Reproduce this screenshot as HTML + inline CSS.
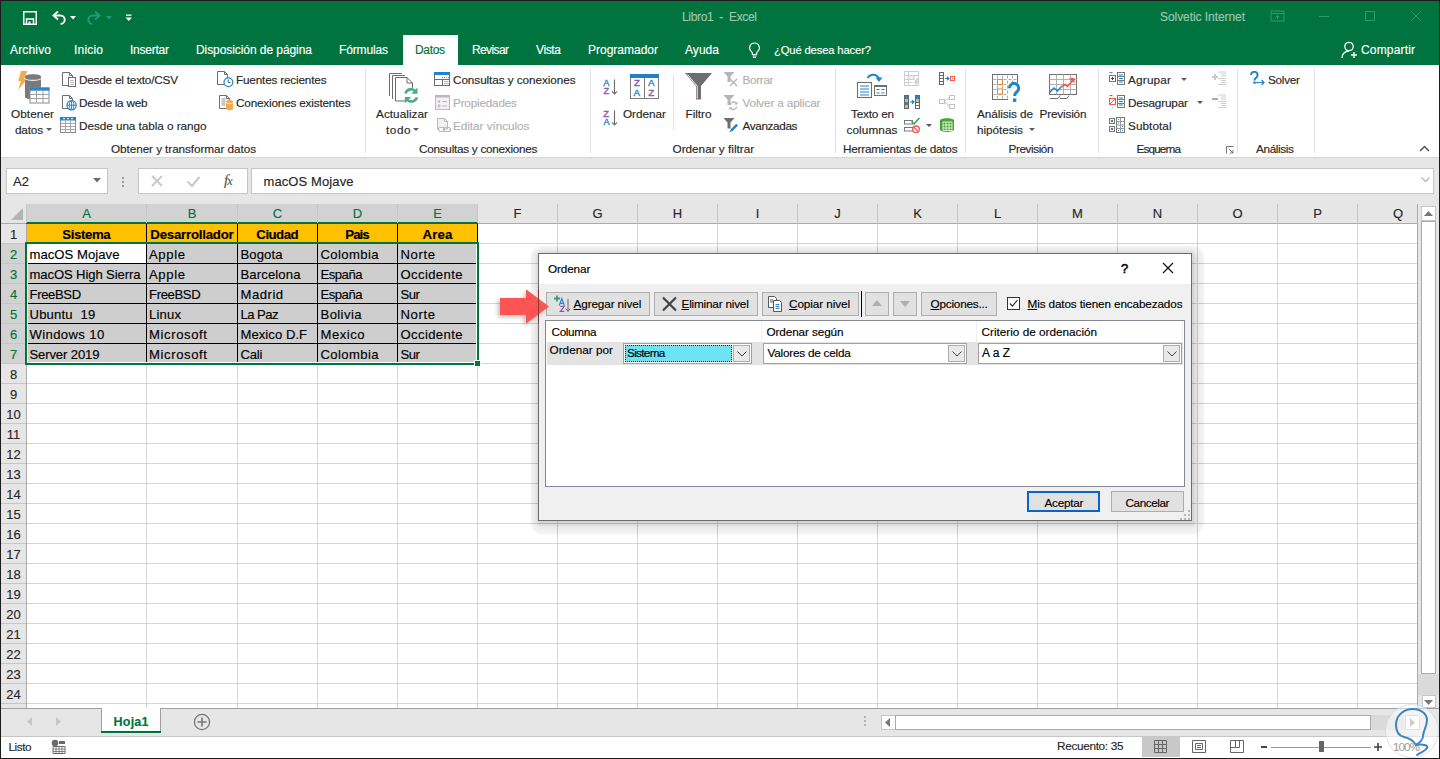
<!DOCTYPE html>
<html><head><meta charset="utf-8">
<style>
*{box-sizing:border-box;margin:0;padding:0}
html,body{width:1440px;height:759px;overflow:hidden;background:#fff;font-family:"Liberation Sans",sans-serif;color:#262626}
.a{position:absolute;white-space:nowrap;-webkit-text-stroke:0.15px currentColor}
u{text-decoration:underline;text-underline-offset:1px}
svg{shape-rendering:geometricPrecision}
</style></head><body>

<div class="a" style="left:0px;top:0px;width:1440px;height:65px;background:#00733e"></div>
<div class="a" style="left:403px;top:35px;width:55px;height:30px;background:#fff"></div>
<div class="a" style="left:682.00px;top:11px;font-size:12px;line-height:12px;color:#9cc8b0;letter-spacing:-0.335px;">Libro1&nbsp; -&nbsp; Excel</div>
<div class="a" style="left:1160.00px;top:11px;font-size:12px;line-height:12px;color:#9cc8b0;letter-spacing:-0.065px;">Solvetic Internet</div>
<svg class="a" style="left:22px;top:10px;" width="16" height="16" viewBox="0 0 16 16"><path d="M1.75 1.75h12.5v12.5h-12.5z" fill="none" stroke="#fff" stroke-width="1.5"/><path d="M4.5 14.5v-5.5h7v5.5" fill="none" stroke="#fff" stroke-width="1.5"/><rect x="6.5" y="11.5" width="2" height="3" fill="#fff"/></svg>
<svg class="a" style="left:51px;top:10px;" width="16" height="16" viewBox="0 0 16 16"><path d="M7 1.5L2.5 5.5L7 9.5" stroke="#fff" stroke-width="1.9" fill="none"/><path d="M3 5.5H9.5A4.2 4.2 0 0 1 9.5 13.9" stroke="#fff" stroke-width="1.9" fill="none"/></svg>
<svg class="a" style="left:70px;top:16px;" width="6" height="4" viewBox="0 0 6 4"><path d="M0 0h6l-3 3.5z" fill="#fff"/></svg>
<svg class="a" style="left:86px;top:10px;" width="16" height="16" viewBox="0 0 16 16"><path d="M9 1.5L13.5 5.5L9 9.5" stroke="#1f9c78" stroke-width="1.9" fill="none"/><path d="M13 5.5H6.5A4.2 4.2 0 0 0 6.5 13.9" stroke="#1f9c78" stroke-width="1.9" fill="none"/></svg>
<svg class="a" style="left:106px;top:16px;" width="6" height="4" viewBox="0 0 6 4"><path d="M0 0h6l-3 3.5z" fill="#1f9c78"/></svg>
<svg class="a" style="left:125px;top:14px;" width="8" height="9" viewBox="0 0 8 9"><rect x="1" y="0.5" width="5.5" height="1.3" fill="#fff"/><path d="M0.5 3.5h6.5l-3.25 3.5z" fill="#fff"/></svg>
<svg class="a" style="left:1270px;top:10px;" width="15" height="12" viewBox="0 0 15 12"><rect x="1" y="1" width="13" height="10" fill="none" stroke="#2a9a70" stroke-width="1"/><path d="M1 3.5h13" stroke="#2a9a70"/><path d="M7.5 9.5v-4M5.5 7.5l2-2 2 2" stroke="#2a9a70" fill="none"/></svg>
<div class="a" style="left:1319px;top:16px;width:10px;height:1px;background:#2a9a70"></div>
<svg class="a" style="left:1364px;top:10px;" width="12" height="12" viewBox="0 0 12 12"><rect x="1.5" y="1.5" width="9" height="9" fill="none" stroke="#2a9a70" stroke-width="1"/></svg>
<svg class="a" style="left:1410px;top:10px;" width="12" height="12" viewBox="0 0 12 12"><path d="M1 1L11 11M11 1L1 11" stroke="#2a9a70" stroke-width="1"/></svg>
<div class="a" style="left:10.00px;top:44px;font-size:12px;line-height:12px;color:#ffffff;letter-spacing:0.163px;">Archivo</div>
<div class="a" style="left:74.00px;top:44px;font-size:12px;line-height:12px;color:#ffffff;letter-spacing:0.198px;">Inicio</div>
<div class="a" style="left:130.00px;top:44px;font-size:12px;line-height:12px;color:#ffffff;letter-spacing:-0.240px;">Insertar</div>
<div class="a" style="left:196.00px;top:44px;font-size:12px;line-height:12px;color:#ffffff;letter-spacing:-0.071px;">Disposición de página</div>
<div class="a" style="left:339.00px;top:44px;font-size:12px;line-height:12px;color:#ffffff;letter-spacing:-0.145px;">Fórmulas</div>
<div class="a" style="left:472.00px;top:44px;font-size:12px;line-height:12px;color:#ffffff;letter-spacing:-0.613px;">Revisar</div>
<div class="a" style="left:536.00px;top:44px;font-size:12px;line-height:12px;color:#ffffff;letter-spacing:-0.368px;">Vista</div>
<div class="a" style="left:588.00px;top:44px;font-size:12px;line-height:12px;color:#ffffff;">Programador</div>
<div class="a" style="left:685.00px;top:44px;font-size:12px;line-height:12px;color:#ffffff;letter-spacing:0.046px;">Ayuda</div>
<div class="a" style="left:1361.00px;top:44px;font-size:12px;line-height:12px;color:#ffffff;letter-spacing:0.165px;">Compartir</div>
<div class="a" style="left:774.00px;top:45px;font-size:11.25px;line-height:11.25px;color:#ffffff;letter-spacing:-0.152px;">¿Qué desea hacer?</div>
<div class="a" style="left:415.00px;top:44px;font-size:12px;line-height:12px;color:#00733e;letter-spacing:-0.336px;">Datos</div>
<svg class="a" style="left:748px;top:42px;" width="13" height="16" viewBox="0 0 13 16"><path d="M6.5 1a4.8 4.8 0 0 0-3 8.6c.6.5.9 1.2.9 2v.9h4.2v-.9c0-.8.3-1.5.9-2A4.8 4.8 0 0 0 6.5 1z" fill="none" stroke="#fff" stroke-width="1.2"/><path d="M4.5 14h4M5 15.5h3" stroke="#fff" stroke-width="1.1"/></svg>
<svg class="a" style="left:1341px;top:41px;" width="18" height="18" viewBox="0 0 18 18"><circle cx="8" cy="5.5" r="4.2" fill="none" stroke="#fff" stroke-width="1.3"/><path d="M1 17c0-4 3-7 7-7" fill="none" stroke="#fff" stroke-width="1.3"/><path d="M13 11v6M10 14h6" stroke="#fff" stroke-width="1.4"/></svg>
<div class="a" style="left:0px;top:65px;width:1440px;height:92px;background:#fff"></div>
<div class="a" style="left:0px;top:157px;width:1440px;height:1px;background:#d5d5d5"></div>
<div class="a" style="left:365px;top:69px;width:1px;height:84px;background:#e1e1e1"></div>
<div class="a" style="left:590px;top:69px;width:1px;height:84px;background:#e1e1e1"></div>
<div class="a" style="left:835px;top:69px;width:1px;height:84px;background:#e1e1e1"></div>
<div class="a" style="left:965px;top:69px;width:1px;height:84px;background:#e1e1e1"></div>
<div class="a" style="left:1098px;top:69px;width:1px;height:84px;background:#e1e1e1"></div>
<div class="a" style="left:1237px;top:69px;width:1px;height:84px;background:#e1e1e1"></div>
<div class="a" style="left:1314px;top:69px;width:1px;height:84px;background:#e1e1e1"></div>
<div class="a" style="left:673px;top:75px;width:1px;height:55px;background:#e1e1e1"></div>
<div class="a" style="left:11.00px;top:108px;font-size:11.75px;line-height:11.75px;color:#262626;letter-spacing:0.091px;">Obtener</div>
<div class="a" style="left:15.00px;top:124px;font-size:11.75px;line-height:11.75px;color:#262626;letter-spacing:-0.185px;">datos</div>
<svg class="a" style="left:46px;top:128px;" width="6" height="4" viewBox="0 0 6 4"><path d="M0 0h6l-3 3z" fill="#5a5a5a"/></svg>
<div class="a" style="left:79.00px;top:74px;font-size:11.75px;line-height:11.75px;color:#262626;letter-spacing:-0.208px;">Desde el texto/CSV</div>
<div class="a" style="left:79.00px;top:97px;font-size:11.75px;line-height:11.75px;color:#262626;letter-spacing:-0.245px;">Desde la web</div>
<div class="a" style="left:79.00px;top:120px;font-size:11.75px;line-height:11.75px;color:#262626;letter-spacing:-0.054px;">Desde una tabla o rango</div>
<div class="a" style="left:236.00px;top:74px;font-size:11.75px;line-height:11.75px;color:#262626;letter-spacing:-0.181px;">Fuentes recientes</div>
<div class="a" style="left:236.00px;top:97px;font-size:11.75px;line-height:11.75px;color:#262626;letter-spacing:-0.186px;">Conexiones existentes</div>
<div class="a" style="left:111.00px;top:143px;font-size:11.75px;line-height:11.75px;color:#262626;letter-spacing:-0.074px;">Obtener y transformar datos</div>
<div class="a" style="left:376.00px;top:108px;font-size:11.75px;line-height:11.75px;color:#262626;letter-spacing:0.045px;">Actualizar</div>
<div class="a" style="left:386.00px;top:124px;font-size:11.75px;line-height:11.75px;color:#262626;letter-spacing:0.545px;">todo</div>
<svg class="a" style="left:413px;top:128px;" width="6" height="4" viewBox="0 0 6 4"><path d="M0 0h6l-3 3z" fill="#5a5a5a"/></svg>
<div class="a" style="left:453.00px;top:74px;font-size:11.75px;line-height:11.75px;color:#262626;letter-spacing:-0.076px;">Consultas y conexiones</div>
<div class="a" style="left:453.00px;top:97px;font-size:11.75px;line-height:11.75px;color:#b1b1b1;letter-spacing:-0.198px;">Propiedades</div>
<div class="a" style="left:453.00px;top:120px;font-size:11.75px;line-height:11.75px;color:#b1b1b1;letter-spacing:-0.041px;">Editar vínculos</div>
<div class="a" style="left:419.00px;top:143px;font-size:11.75px;line-height:11.75px;color:#262626;letter-spacing:-0.267px;">Consultas y conexiones</div>
<div class="a" style="left:623.00px;top:108px;font-size:11.75px;line-height:11.75px;color:#262626;letter-spacing:-0.017px;">Ordenar</div>
<div class="a" style="left:685.50px;top:108px;font-size:11.75px;line-height:11.75px;color:#262626;letter-spacing:-0.022px;">Filtro</div>
<div class="a" style="left:742.50px;top:74px;font-size:11.75px;line-height:11.75px;color:#b1b1b1;letter-spacing:-0.328px;">Borrar</div>
<div class="a" style="left:742.50px;top:97px;font-size:11.75px;line-height:11.75px;color:#b1b1b1;letter-spacing:-0.156px;">Volver a aplicar</div>
<div class="a" style="left:742.50px;top:120px;font-size:11.75px;line-height:11.75px;color:#262626;letter-spacing:-0.366px;">Avanzadas</div>
<div class="a" style="left:672.50px;top:143px;font-size:11.75px;line-height:11.75px;color:#262626;">Ordenar y filtrar</div>
<div class="a" style="left:851.00px;top:108px;font-size:11.75px;line-height:11.75px;color:#262626;letter-spacing:-0.202px;">Texto en</div>
<div class="a" style="left:846.50px;top:124px;font-size:11.75px;line-height:11.75px;color:#262626;letter-spacing:0.101px;">columnas</div>
<div class="a" style="left:843.00px;top:143px;font-size:11.75px;line-height:11.75px;color:#262626;letter-spacing:-0.218px;">Herramientas de datos</div>
<div class="a" style="left:977.00px;top:108px;font-size:11.75px;line-height:11.75px;color:#262626;letter-spacing:-0.082px;">Análisis de</div>
<div class="a" style="left:977.00px;top:124px;font-size:11.75px;line-height:11.75px;color:#262626;letter-spacing:-0.047px;">hipótesis</div>
<svg class="a" style="left:1029px;top:128px;" width="6" height="4" viewBox="0 0 6 4"><path d="M0 0h6l-3 3z" fill="#5a5a5a"/></svg>
<div class="a" style="left:1039.50px;top:108px;font-size:11.75px;line-height:11.75px;color:#262626;letter-spacing:-0.166px;">Previsión</div>
<div class="a" style="left:1008.50px;top:143px;font-size:11.75px;line-height:11.75px;color:#262626;letter-spacing:-0.416px;">Previsión</div>
<div class="a" style="left:1128.00px;top:74px;font-size:11.75px;line-height:11.75px;color:#262626;letter-spacing:0.199px;">Agrupar</div>
<svg class="a" style="left:1181px;top:78px;" width="6" height="4" viewBox="0 0 6 4"><path d="M0 0h6l-3 3z" fill="#5a5a5a"/></svg>
<div class="a" style="left:1128.00px;top:97px;font-size:11.75px;line-height:11.75px;color:#262626;letter-spacing:-0.155px;">Desagrupar</div>
<svg class="a" style="left:1197px;top:101px;" width="6" height="4" viewBox="0 0 6 4"><path d="M0 0h6l-3 3z" fill="#5a5a5a"/></svg>
<div class="a" style="left:1128.00px;top:120px;font-size:11.75px;line-height:11.75px;color:#262626;letter-spacing:0.056px;">Subtotal</div>
<div class="a" style="left:1136.50px;top:143px;font-size:11.75px;line-height:11.75px;color:#262626;letter-spacing:-0.857px;">Esquema</div>
<svg class="a" style="left:1226px;top:146px;" width="8" height="8" viewBox="0 0 8 8"><path d="M0.5 0.5h7M0.5 0.5v7" stroke="#777" fill="none"/><path d="M3 3l4 4M7 4v3h-3" stroke="#777" fill="none"/></svg>
<div class="a" style="left:1268.00px;top:74px;font-size:11.75px;line-height:11.75px;color:#262626;letter-spacing:-0.262px;">Solver</div>
<div class="a" style="left:1256.00px;top:143px;font-size:11.75px;line-height:11.75px;color:#262626;letter-spacing:-0.356px;">Análisis</div>
<svg class="a" style="left:1419px;top:145px;" width="11" height="7" viewBox="0 0 11 7"><path d="M1 6l4.5-4.5L10 6" stroke="#555" stroke-width="1.5" fill="none"/></svg>
<svg class="a" style="left:15px;top:70px;" width="36" height="34" viewBox="0 0 36 34"><path d="M6 1H12.5L9 9H12L3 20L6 11H3.2z" fill="#f6a94e"/><path d="M10 6.5C10 3.5 26 3.5 26 6.5V27C26 30 10 30 10 27z" fill="#7a7a7a"/><path d="M10 8.5C12 11 24 11 26 8.5" stroke="#eee" stroke-width="1.2" fill="none"/><rect x="15" y="18" width="19" height="15" fill="#fff" stroke="#8a8a8a"/><rect x="15" y="17.5" width="19.5" height="3.2" fill="#2b84cc"/><path d="M21.5 20.5V32.5M28 20.5V32.5M15.5 24.5H34M15.5 28.5H34" stroke="#a0a0a0" stroke-width="1"/></svg>
<svg class="a" style="left:61px;top:71px;" width="17" height="17" viewBox="0 0 17 17"><path d="M1.5 1.5H8.5L11.5 4.5V14.5H1.5z" fill="#fff" stroke="#6d6d6d"/><path d="M8.5 1.5V4.5H11.5" fill="none" stroke="#6d6d6d"/><rect x="7.5" y="6.5" width="7" height="9" fill="#fff" stroke="#6d6d6d"/><path d="M9 9.5h4M9 11.5h4M9 13.5h4" stroke="#999" stroke-width=".6"/></svg>
<svg class="a" style="left:61px;top:94px;" width="17" height="17" viewBox="0 0 17 17"><path d="M1.5 1.5H8.5L11.5 4.5V14.5H1.5z" fill="#fff" stroke="#6d6d6d"/><path d="M8.5 1.5V4.5H11.5" fill="none" stroke="#6d6d6d"/><circle cx="10.6" cy="11.2" r="4.6" fill="#fff" stroke="#1f85cc" stroke-width="1.3"/><path d="M6.5 11.2h8.2M10.6 6.8v8.8" stroke="#1f85cc" stroke-width="1"/><ellipse cx="10.6" cy="11.2" rx="2.2" ry="4.4" fill="none" stroke="#1f85cc" stroke-width=".9"/></svg>
<svg class="a" style="left:60px;top:117px;" width="17" height="16" viewBox="0 0 17 16"><rect x=".5" y="1.5" width="15" height="14" fill="#fff" stroke="#8a8a8a"/><rect x="0" y="0" width="16" height="3.5" fill="#1f85cc"/><path d="M3 1.7h2M7 1.7h2M11 1.7h2" stroke="#fff" stroke-width="1"/><path d="M5.5 3.5v12M10.5 3.5v12M.5 6.5h15M.5 9.5h15M.5 12.5h15" stroke="#a5a5a5" stroke-width="1"/></svg>
<svg class="a" style="left:216px;top:70px;" width="18" height="18" viewBox="0 0 18 18"><path d="M1.5 1.5H8.5L11.5 4.5V14.5H1.5z" fill="#fff" stroke="#6d6d6d"/><path d="M8.5 1.5V4.5H11.5" fill="none" stroke="#6d6d6d"/><circle cx="12.4" cy="12.2" r="4.4" fill="#fff" stroke="#1f85cc" stroke-width="1.2"/><path d="M12.2 9.5v3h2.3" stroke="#555" fill="none" stroke-width=".9"/></svg>
<svg class="a" style="left:218px;top:94px;" width="17" height="17" viewBox="0 0 17 17"><path d="M1.5 1.5H8.5L11.5 4.5V14.5H1.5z" fill="#fff" stroke="#6d6d6d"/><path d="M8.5 1.5V4.5H11.5" fill="none" stroke="#6d6d6d"/><path d="M3.5 5h4M3.5 7h4M3.5 9h4M3.5 11h4" stroke="#888" stroke-width=".9"/><path d="M8 7.2C8 5.8 15 5.8 15 7.2V15C15 16.5 8 16.5 8 15z" fill="#f8a74b"/><path d="M8 8.7C9.5 10 13.5 10 15 8.7" stroke="#fff" stroke-width=".8" fill="none"/></svg>
<svg class="a" style="left:388px;top:72px;" width="32" height="31" viewBox="0 0 32 31"><path d="M1.5 24V1.5H14" fill="none" stroke="#6d6d6d"/><path d="M4.5 27V3.5H17" fill="none" stroke="#6d6d6d"/><path d="M7.5 29V5.5H19L24.5 11V29z" fill="#fff" stroke="#6d6d6d"/><path d="M19 5.5V11H24.5" fill="none" stroke="#6d6d6d"/><rect x="18" y="16" width="14" height="14" fill="#fff"/><path d="M17.5 21.5A5.6 5.6 0 0 1 27.6 19.8" stroke="#48ad83" stroke-width="2.6" fill="none"/><path d="M29.5 15.5V21.8H23.3z" fill="#48ad83"/><path d="M28.9 25.3A5.6 5.6 0 0 1 18.8 27" stroke="#48ad83" stroke-width="2.6" fill="none"/><path d="M16.9 31.3V25H23.1z" fill="#48ad83"/></svg>
<svg class="a" style="left:433px;top:71px;" width="18" height="16" viewBox="0 0 18 16"><rect x="1.5" y="1.5" width="15" height="13" fill="#fff" stroke="#6d6d6d"/><rect x="1" y="1" width="16" height="3" fill="#1f85cc"/><path d="M1.5 8.5h15M9.5 8.5v6" stroke="#6d6d6d" stroke-width="1"/><path d="M11 10.5h4.5M11 12.5h4.5" stroke="#999" stroke-width=".7"/><path d="M9 6.5h1M11 6.5h1M13 6.5h1M15 6.5h1" stroke="#888"/></svg>
<svg class="a" style="left:434px;top:94px;" width="17" height="17" viewBox="0 0 17 17"><rect x="1.5" y="1.5" width="14" height="14" fill="#f4f0f4" stroke="#b9b9b9"/><rect x="1" y="1" width="15" height="2.5" fill="#b9b9b9"/><circle cx="5" cy="7.5" r="1.3" fill="#b9b9b9"/><circle cx="5" cy="12" r="1.2" fill="none" stroke="#b9b9b9"/><path d="M8 7.5h5M8 12h5" stroke="#b9b9b9"/></svg>
<svg class="a" style="left:436px;top:117px;" width="17" height="16" viewBox="0 0 17 16"><path d="M1.5 1.5H8.5L11.5 4.5V12H1.5z" fill="#f4f0f4" stroke="#b9b9b9"/><path d="M8.5 1.5V4.5H11.5" fill="none" stroke="#b9b9b9"/><rect x="2.5" y="10.5" width="6" height="4" rx="2" fill="#fff" stroke="#b9b9b9" stroke-width="1.2"/><rect x="7.5" y="10.5" width="7" height="4" rx="2" fill="none" stroke="#b9b9b9" stroke-width="1.2"/></svg>
<svg class="a" style="left:603px;top:79px;" width="15" height="16" viewBox="0 0 15 16"><text x="0.2" y="7" font-family="Liberation Sans" font-size="9.2" fill="#1f85cc" stroke="#1f85cc" stroke-width="0.35">A</text><text x="0.6" y="15" font-family="Liberation Sans" font-size="9.2" fill="#8e55b6" stroke="#8e55b6" stroke-width="0.35">Z</text><path d="M11.5 0.5V15M9 12.3L11.5 15L14 12.3" stroke="#6a6a6a" stroke-width="1.1" fill="none"/></svg>
<svg class="a" style="left:603px;top:110px;" width="15" height="16" viewBox="0 0 15 16"><text x="0.2" y="7" font-family="Liberation Sans" font-size="9.2" fill="#8e55b6" stroke="#8e55b6" stroke-width="0.35">Z</text><text x="0.6" y="15" font-family="Liberation Sans" font-size="9.2" fill="#1f85cc" stroke="#1f85cc" stroke-width="0.35">A</text><path d="M11.5 0.5V15M9 12.3L11.5 15L14 12.3" stroke="#6a6a6a" stroke-width="1.1" fill="none"/></svg>
<svg class="a" style="left:630px;top:73px;" width="30" height="27" viewBox="0 0 30 27"><rect x=".5" y="1.5" width="28" height="24" fill="#fff" stroke="#7a7a7a"/><rect x="0" y="1" width="29" height="4" fill="#1f82c8"/><path d="M14.5 5v20.5" stroke="#7a7a7a"/><text x="4" y="13.3" font-family="Liberation Sans" font-size="9.8" fill="#8e55b6" stroke="#8e55b6" stroke-width="0.35">Z</text><text x="3.6" y="23.2" font-family="Liberation Sans" font-size="9.8" fill="#1f85cc" stroke="#1f85cc" stroke-width="0.35">A</text><text x="17.9" y="13.3" font-family="Liberation Sans" font-size="9.8" fill="#1f85cc" stroke="#1f85cc" stroke-width="0.35">A</text><text x="18.3" y="23.2" font-family="Liberation Sans" font-size="9.8" fill="#8e55b6" stroke="#8e55b6" stroke-width="0.35">Z</text></svg>
<svg class="a" style="left:684px;top:72px;" width="30" height="29" viewBox="0 0 30 29"><path d="M1 1H28L17 14V27.5H12V14z" fill="#6e6e6e"/><path d="M3.5 2.5L13.2 14.2V26.5" stroke="#fff" stroke-width=".9" fill="none"/></svg>
<svg class="a" style="left:723px;top:71px;" width="15" height="17" viewBox="0 0 15 17"><path d="M.5 1H11.5L7.5 5.5V11H4.5V5.5z" fill="#b5b5b5"/><path d="M7 8L14 15M14 8L7 15" stroke="#b5b5b5" stroke-width="1.4"/></svg>
<svg class="a" style="left:723px;top:94px;" width="15" height="17" viewBox="0 0 15 17"><path d="M.5 1H11.5L7.5 5.5V11H4.5V5.5z" fill="#b5b5b5"/><path d="M7 11a3.5 3.5 0 0 1 6.5-1.2M13.8 12.5a3.5 3.5 0 0 1-6.5 1.2" stroke="#b5b5b5" stroke-width="1.3" fill="none"/><path d="M14.5 7.5v3h-3zM6.3 16.2v-3h3z" fill="#b5b5b5"/></svg>
<svg class="a" style="left:723px;top:117px;" width="16" height="17" viewBox="0 0 16 17"><path d="M.5 1H11.5L7.5 5.5V11.5H4.5V5.5z" fill="#6e6e6e"/><path d="M6.5 15.5L8 12L13.2 6.8L15 8.6L9.8 13.8z" fill="#1f85cc"/></svg>
<svg class="a" style="left:856px;top:72px;" width="33" height="27" viewBox="0 0 33 27"><rect x="1.5" y="10.5" width="14" height="15" fill="#fff" stroke="#707070" stroke-width="1.1"/><path d="M4 14h9M4 17h9M4 20h9M4 23h9" stroke="#1f85cc" stroke-width="1.1"/><rect x="18.5" y="13.5" width="12" height="10" fill="#fff" stroke="#707070"/><rect x="18" y="13" width="13" height="2" fill="#707070"/><path d="M20.5 17.5h3M25.5 17.5h3M20.5 21h3M25.5 21h3" stroke="#1f85cc" stroke-width="1.1"/><path d="M11.5 6A6.5 6.5 0 0 1 23 6.5" stroke="#1f85cc" stroke-width="1.8" fill="none"/><path d="M19.5 5.5H26.5L23 10z" fill="#1f85cc"/></svg>
<svg class="a" style="left:903px;top:71px;" width="18" height="17" viewBox="0 0 18 17"><rect x="1.5" y=".5" width="14" height="14" fill="none" stroke="#cfcfcf"/><path d="M1.5 4.5h14M1.5 8.5h10M1.5 11.5h8M5.5 .5v14" stroke="#cfcfcf"/><rect x="5" y="5" width="6" height="3" fill="#fff" stroke="#cfcfcf"/><path d="M14 7L10.5 12H13L10 16.5L16.5 10.5H14L16.5 7z" fill="#cfcfcf"/></svg>
<svg class="a" style="left:903px;top:94px;" width="18" height="16" viewBox="0 0 18 16"><rect x="1.5" y="1.5" width="4" height="13" fill="#fff" stroke="#666"/><rect x="12.5" y="1.5" width="4" height="13" fill="#fff" stroke="#666"/><rect x="2" y="2" width="3" height="3" fill="#2b84cc"/><rect x="2" y="5" width="3" height="3" fill="#f5b04a"/><rect x="2" y="8" width="3" height="3" fill="#2b84cc"/><rect x="2" y="11" width="3" height="3" fill="#f5b04a"/><rect x="13" y="2" width="3" height="3" fill="#2b84cc"/><rect x="13" y="5" width="3" height="3" fill="#f5b04a"/><path d="M12.5 8.5h4M12.5 11.5h4" stroke="#666"/><path d="M7 8h3.5M9 6.2L11 8L9 9.8" stroke="#1f85cc" stroke-width="1.2" fill="none"/></svg>
<svg class="a" style="left:903px;top:117px;" width="18" height="16" viewBox="0 0 18 16"><rect x="1.5" y="3.5" width="8" height="3.5" fill="none" stroke="#6f7a86"/><rect x="1.5" y="10.5" width="8" height="3.5" fill="none" stroke="#6f7a86"/><path d="M8.5 4.5l2.5 2.3L16.5 1" stroke="#3d9f73" stroke-width="1.6" fill="none"/><circle cx="13" cy="12.3" r="3.3" fill="#fff" stroke="#f25c4f" stroke-width="1.4"/><path d="M10.8 10.2L15.2 14.5" stroke="#f25c4f" stroke-width="1.3"/></svg>
<svg class="a" style="left:926px;top:124px;" width="6" height="4" viewBox="0 0 6 4"><path d="M0 0h6l-3 3z" fill="#555"/></svg>
<svg class="a" style="left:938px;top:71px;" width="18" height="16" viewBox="0 0 18 16"><rect x="1.5" y="1.5" width="4" height="12" fill="#fff" stroke="#666"/><path d="M1.5 4.5h4M1.5 7.5h4M1.5 10.5h4" stroke="#666"/><path d="M7 7.5h3.5M9 5.7L11 7.5L9 9.3" stroke="#1f85cc" stroke-width="1.2" fill="none"/><rect x="12.5" y="5.5" width="4" height="4" fill="#fff" stroke="#f25c4f"/><rect x="14" y="7" width="1" height="1" fill="#f25c4f"/></svg>
<svg class="a" style="left:938px;top:94px;" width="18" height="16" viewBox="0 0 18 16"><rect x="1.5" y="5.5" width="5" height="4" fill="none" stroke="#c3c3c3"/><rect x="11.5" y="1.5" width="5" height="4" fill="none" stroke="#c3c3c3"/><rect x="11.5" y="10.5" width="5" height="4" fill="none" stroke="#c3c3c3"/><path d="M6.5 7.5L11.5 3.5M6.5 7.5L11.5 12.5" stroke="#c3c3c3"/></svg>
<svg class="a" style="left:938px;top:117px;" width="18" height="16" viewBox="0 0 18 16"><path d="M2 3C4 0.5 14 0.5 16 3V13C14 15.5 4 15.5 2 13z" fill="#41a830"/><path d="M5 5h9v8.5h-9z" fill="none" stroke="#fff" stroke-width=".8"/><path d="M5 8h9M5 11h9M8 5v8.5M11 5v8.5" stroke="#fff" stroke-width=".8"/></svg>
<svg class="a" style="left:991px;top:73px;" width="32" height="31" viewBox="0 0 32 31"><rect x="1.5" y="1.5" width="25" height="25" fill="#fff" stroke="#707070"/><path d="M6.5 1.5v25M11.5 1.5v25M16.5 1.5v25M21.5 1.5v25M1.5 6.5h25M1.5 11.5h25M1.5 16.5h25M1.5 21.5h25" stroke="#a9a9a9" stroke-width="1" stroke-dasharray="3 2" stroke-dashoffset="-1"/><rect x="6.5" y="6.5" width="5" height="5" fill="#fff" stroke="#e0883a" stroke-width="1"/><rect x="6.5" y="16" width="5" height="5" fill="#fff" stroke="#e0883a" stroke-width="1"/><path d="M17 10.5h10v20h-10z" fill="#fff"/><path d="M18.3 15.2a4.7 4.7 0 1 1 7.6 3.6c-1.7 1.3-2.3 2.1-2.3 4.2" stroke="#1f85cc" stroke-width="3" fill="none"/><rect x="21.9" y="25.5" width="3.4" height="3.4" fill="#1f85cc"/></svg>
<svg class="a" style="left:1048px;top:73px;" width="30" height="27" viewBox="0 0 30 27"><rect x="1.5" y="1.5" width="27" height="20" fill="#fff" stroke="#707070"/><path d="M8.5 1.5v20M15.5 1.5v20M22.5 1.5v20M1.5 6.5h27M1.5 11.5h27M1.5 16.5h27" stroke="#b0b0b0"/><path d="M2 25.5h8l2-3M12 25.5h7l2-3" stroke="#707070" fill="none"/><path d="M1.5 19.5L6 15L9.5 18L13 14" stroke="#1f85cc" stroke-width="1.6" fill="none"/><path d="M13 14L17 11.5L19.5 13.5L25 7" stroke="#f25747" stroke-width="1.6" fill="none"/><path d="M21 5H26.5V10.5z" fill="#f25747"/></svg>
<svg class="a" style="left:1109px;top:72px;" width="17" height="14" viewBox="0 0 17 14"><path d="M3.5 .5h-3v12.5h3" fill="none" stroke="#777" stroke-dasharray="3 6"/><rect x=".5" y="3.5" width="6" height="6" fill="#fff" stroke="#777"/><path d="M2 6.5h3M3.5 5v3" stroke="#444"/><rect x="8.5" y=".5" width="7" height="12" fill="#fff" stroke="#777"/><path d="M10 3h4M10 6.5h4M10 10h4" stroke="#1f85cc" stroke-width="1.2"/><path d="M8.5 4.5h7M8.5 8.5h7" stroke="#777"/></svg>
<svg class="a" style="left:1109px;top:95px;" width="17" height="14" viewBox="0 0 17 14"><path d="M3.5 .5h-3v12.5h3" fill="none" stroke="#777" stroke-dasharray="3 6"/><rect x=".5" y="3.5" width="6" height="6" fill="#fff" stroke="#f25c4f" stroke-width="1.1"/><path d="M1 9L6.5 3.5" stroke="#f25c4f"/><rect x="8.5" y=".5" width="7" height="12" fill="#fff" stroke="#777"/><path d="M10 3h4M10 6.5h4M10 10h4" stroke="#1f85cc" stroke-width="1.2"/><path d="M8.5 4.5h7M8.5 8.5h7" stroke="#777"/></svg>
<svg class="a" style="left:1109px;top:117px;" width="17" height="16" viewBox="0 0 17 16"><rect x=".5" y="1.5" width="5" height="5" fill="#fff" stroke="#777"/><rect x=".5" y="9.5" width="5" height="5" fill="#fff" stroke="#777"/><path d="M1.8 4h2.4M3 2.8v2.4M1.8 12h2.4M3 10.8v2.4" stroke="#444"/><rect x="7.5" y=".5" width="8" height="15" fill="#fff" stroke="#777"/><path d="M11.5 .5v15M7.5 4.5h8M7.5 8h8M7.5 11.5h8" stroke="#999"/><path d="M9 2.5h1M9 6h1M13 9.5h1M9 13.5h1M13 13.5h1" stroke="#1f85cc"/></svg>
<svg class="a" style="left:1211px;top:71px;" width="16" height="15" viewBox="0 0 16 15"><path d="M1 6h6M4 3v6" stroke="#c8c8c8" stroke-width="1.8"/><path d="M7 1h8M10 3h5M10 5h5M7 7.5h8M10 9.5h5M10 11.5h5M7 13.5h8" stroke="#c8c8c8" stroke-width=".9"/></svg>
<svg class="a" style="left:1211px;top:94px;" width="16" height="15" viewBox="0 0 16 15"><path d="M1 5h6" stroke="#b0b0b0" stroke-width="2.2"/><path d="M7 1h8M10 3h5M10 5h5M7 7.5h8M10 9.5h5M10 11.5h5M7 13.5h8" stroke="#c8c8c8" stroke-width=".9"/></svg>
<svg class="a" style="left:1249px;top:71px;" width="17" height="15" viewBox="0 0 17 15"><path d="M2 4a3.3 3.3 0 1 1 5 2.8C5.8 7.7 5.5 8.3 5.5 9.5" stroke="#1f85cc" stroke-width="2" fill="none"/><rect x="4.3" y="10.5" width="2.5" height="2.3" fill="#1f85cc"/><path d="M7 11.5h8M12.5 9L15 11.5L12.5 14" stroke="#1f85cc" stroke-width="1.2" fill="none"/></svg>
<div class="a" style="left:0px;top:158px;width:1440px;height:46px;background:#e6e6e6"></div>
<div class="a" style="left:6px;top:168px;width:102px;height:26px;background:#fff;border:1px solid #c6c6c6"></div>
<div class="a" style="left:13.00px;top:175px;font-size:13px;line-height:13px;color:#262626;letter-spacing:0.101px;">A2</div>
<svg class="a" style="left:93px;top:178px;" width="9" height="6" viewBox="0 0 9 6"><path d="M0 0h8l-4 4.5z" fill="#6d6d6d"/></svg>
<div class="a" style="left:122px;top:177px;width:2px;height:2px;background:#9a9a9a"></div>
<div class="a" style="left:122px;top:181px;width:2px;height:2px;background:#9a9a9a"></div>
<div class="a" style="left:122px;top:185px;width:2px;height:2px;background:#9a9a9a"></div>
<div class="a" style="left:138px;top:168px;width:110px;height:26px;background:#fff;border:1px solid #c6c6c6"></div>
<svg class="a" style="left:150px;top:174px;" width="15" height="14" viewBox="0 0 15 14"><path d="M2 2L12 12M12 2L2 12" stroke="#c8c8c8" stroke-width="1.8"/></svg>
<svg class="a" style="left:186px;top:175px;" width="15" height="13" viewBox="0 0 15 13"><path d="M1.5 6.5l4.5 4.5 7.5-9" stroke="#c8c8c8" stroke-width="2" fill="none"/></svg>
<div class="a" style="left:224px;top:173px;font-family:'Liberation Serif';font-style:italic;font-size:15px;line-height:15px;color:#555">f<span style="font-size:12px;position:relative;left:-1px">x</span></div>
<div class="a" style="left:251px;top:168px;width:1183px;height:26px;background:#fff;border:1px solid #c6c6c6"></div>
<div class="a" style="left:263.50px;top:175px;font-size:13px;line-height:13px;color:#262626;letter-spacing:0.104px;">macOS Mojave</div>
<svg class="a" style="left:1421px;top:177px;" width="9" height="6" viewBox="0 0 9 6"><path d="M0.5 0.5l4 4 4-4" stroke="#b7b7b7" stroke-width="1.3" fill="none"/></svg>
<div class="a" style="left:1px;top:204px;width:1417px;height:504px;background:#fff"></div>
<div class="a" style="left:1px;top:204px;width:1417px;height:19px;background:#e6e6e6"></div>
<div class="a" style="left:27px;top:204px;width:451px;height:18px;background:#d2d2d2"></div>
<div class="a" style="left:1px;top:223px;width:1417px;height:1px;background:#ababab"></div>
<div class="a" style="left:26px;top:222px;width:452px;height:2px;background:#00733e"></div>
<svg class="a" style="left:11px;top:208px;" width="13" height="13" viewBox="0 0 13 13"><path d="M12 0V12H0z" fill="#b4b4b4"/></svg>
<div class="a" style="left:82.16px;top:207px;font-size:13px;line-height:13px;color:#00733e;">A</div>
<div class="a" style="left:146px;top:204px;width:1px;height:19px;background:#c6c6c6"></div>
<div class="a" style="left:187.66px;top:207px;font-size:13px;line-height:13px;color:#00733e;">B</div>
<div class="a" style="left:237px;top:204px;width:1px;height:19px;background:#c6c6c6"></div>
<div class="a" style="left:272.81px;top:207px;font-size:13px;line-height:13px;color:#00733e;">C</div>
<div class="a" style="left:317px;top:204px;width:1px;height:19px;background:#c6c6c6"></div>
<div class="a" style="left:352.81px;top:207px;font-size:13px;line-height:13px;color:#00733e;">D</div>
<div class="a" style="left:397px;top:204px;width:1px;height:19px;background:#c6c6c6"></div>
<div class="a" style="left:433.16px;top:207px;font-size:13px;line-height:13px;color:#00733e;">E</div>
<div class="a" style="left:477px;top:204px;width:1px;height:19px;background:#c6c6c6"></div>
<div class="a" style="left:513.53px;top:207px;font-size:13px;line-height:13px;color:#262626;">F</div>
<div class="a" style="left:557px;top:204px;width:1px;height:19px;background:#c6c6c6"></div>
<div class="a" style="left:592.44px;top:207px;font-size:13px;line-height:13px;color:#262626;">G</div>
<div class="a" style="left:637px;top:204px;width:1px;height:19px;background:#c6c6c6"></div>
<div class="a" style="left:672.81px;top:207px;font-size:13px;line-height:13px;color:#262626;">H</div>
<div class="a" style="left:717px;top:204px;width:1px;height:19px;background:#c6c6c6"></div>
<div class="a" style="left:755.69px;top:207px;font-size:13px;line-height:13px;color:#262626;">I</div>
<div class="a" style="left:797px;top:204px;width:1px;height:19px;background:#c6c6c6"></div>
<div class="a" style="left:834.25px;top:207px;font-size:13px;line-height:13px;color:#262626;">J</div>
<div class="a" style="left:877px;top:204px;width:1px;height:19px;background:#c6c6c6"></div>
<div class="a" style="left:913.16px;top:207px;font-size:13px;line-height:13px;color:#262626;">K</div>
<div class="a" style="left:957px;top:204px;width:1px;height:19px;background:#c6c6c6"></div>
<div class="a" style="left:993.89px;top:207px;font-size:13px;line-height:13px;color:#262626;">L</div>
<div class="a" style="left:1037px;top:204px;width:1px;height:19px;background:#c6c6c6"></div>
<div class="a" style="left:1072.09px;top:207px;font-size:13px;line-height:13px;color:#262626;">M</div>
<div class="a" style="left:1117px;top:204px;width:1px;height:19px;background:#c6c6c6"></div>
<div class="a" style="left:1152.81px;top:207px;font-size:13px;line-height:13px;color:#262626;">N</div>
<div class="a" style="left:1197px;top:204px;width:1px;height:19px;background:#c6c6c6"></div>
<div class="a" style="left:1232.44px;top:207px;font-size:13px;line-height:13px;color:#262626;">O</div>
<div class="a" style="left:1277px;top:204px;width:1px;height:19px;background:#c6c6c6"></div>
<div class="a" style="left:1313.16px;top:207px;font-size:13px;line-height:13px;color:#262626;">P</div>
<div class="a" style="left:1357px;top:204px;width:1px;height:19px;background:#c6c6c6"></div>
<div class="a" style="left:1392.94px;top:207px;font-size:13px;line-height:13px;color:#262626;">Q</div>
<div class="a" style="left:26px;top:204px;width:1px;height:19px;background:#c6c6c6"></div>
<div class="a" style="left:1px;top:224px;width:25px;height:484px;background:#e6e6e6"></div>
<div class="a" style="left:1px;top:243px;width:25px;height:120px;background:#d2d2d2"></div>
<div class="a" style="left:26px;top:224px;width:1px;height:484px;background:#ababab"></div>
<div class="a" style="left:1px;top:243px;width:25px;height:1px;background:#c6c6c6"></div>
<div class="a" style="left:9.89px;top:228px;font-size:13px;line-height:13px;color:#262626;">1</div>
<div class="a" style="left:1px;top:263px;width:25px;height:1px;background:#c6c6c6"></div>
<div class="a" style="left:9.89px;top:248px;font-size:13px;line-height:13px;color:#00733e;">2</div>
<div class="a" style="left:1px;top:283px;width:25px;height:1px;background:#c6c6c6"></div>
<div class="a" style="left:9.89px;top:268px;font-size:13px;line-height:13px;color:#00733e;">3</div>
<div class="a" style="left:1px;top:303px;width:25px;height:1px;background:#c6c6c6"></div>
<div class="a" style="left:9.89px;top:288px;font-size:13px;line-height:13px;color:#00733e;">4</div>
<div class="a" style="left:1px;top:323px;width:25px;height:1px;background:#c6c6c6"></div>
<div class="a" style="left:9.89px;top:308px;font-size:13px;line-height:13px;color:#00733e;">5</div>
<div class="a" style="left:1px;top:343px;width:25px;height:1px;background:#c6c6c6"></div>
<div class="a" style="left:9.89px;top:328px;font-size:13px;line-height:13px;color:#00733e;">6</div>
<div class="a" style="left:1px;top:363px;width:25px;height:1px;background:#c6c6c6"></div>
<div class="a" style="left:9.89px;top:348px;font-size:13px;line-height:13px;color:#00733e;">7</div>
<div class="a" style="left:1px;top:383px;width:25px;height:1px;background:#c6c6c6"></div>
<div class="a" style="left:9.89px;top:368px;font-size:13px;line-height:13px;color:#262626;">8</div>
<div class="a" style="left:1px;top:403px;width:25px;height:1px;background:#c6c6c6"></div>
<div class="a" style="left:9.89px;top:388px;font-size:13px;line-height:13px;color:#262626;">9</div>
<div class="a" style="left:1px;top:423px;width:25px;height:1px;background:#c6c6c6"></div>
<div class="a" style="left:6.27px;top:408px;font-size:13px;line-height:13px;color:#262626;">10</div>
<div class="a" style="left:1px;top:443px;width:25px;height:1px;background:#c6c6c6"></div>
<div class="a" style="left:6.75px;top:428px;font-size:13px;line-height:13px;color:#262626;">11</div>
<div class="a" style="left:1px;top:463px;width:25px;height:1px;background:#c6c6c6"></div>
<div class="a" style="left:6.27px;top:448px;font-size:13px;line-height:13px;color:#262626;">12</div>
<div class="a" style="left:1px;top:483px;width:25px;height:1px;background:#c6c6c6"></div>
<div class="a" style="left:6.27px;top:468px;font-size:13px;line-height:13px;color:#262626;">13</div>
<div class="a" style="left:1px;top:503px;width:25px;height:1px;background:#c6c6c6"></div>
<div class="a" style="left:6.27px;top:488px;font-size:13px;line-height:13px;color:#262626;">14</div>
<div class="a" style="left:1px;top:523px;width:25px;height:1px;background:#c6c6c6"></div>
<div class="a" style="left:6.27px;top:508px;font-size:13px;line-height:13px;color:#262626;">15</div>
<div class="a" style="left:1px;top:543px;width:25px;height:1px;background:#c6c6c6"></div>
<div class="a" style="left:6.27px;top:528px;font-size:13px;line-height:13px;color:#262626;">16</div>
<div class="a" style="left:1px;top:563px;width:25px;height:1px;background:#c6c6c6"></div>
<div class="a" style="left:6.27px;top:548px;font-size:13px;line-height:13px;color:#262626;">17</div>
<div class="a" style="left:1px;top:583px;width:25px;height:1px;background:#c6c6c6"></div>
<div class="a" style="left:6.27px;top:568px;font-size:13px;line-height:13px;color:#262626;">18</div>
<div class="a" style="left:1px;top:603px;width:25px;height:1px;background:#c6c6c6"></div>
<div class="a" style="left:6.27px;top:588px;font-size:13px;line-height:13px;color:#262626;">19</div>
<div class="a" style="left:1px;top:623px;width:25px;height:1px;background:#c6c6c6"></div>
<div class="a" style="left:6.27px;top:608px;font-size:13px;line-height:13px;color:#262626;">20</div>
<div class="a" style="left:1px;top:643px;width:25px;height:1px;background:#c6c6c6"></div>
<div class="a" style="left:6.27px;top:628px;font-size:13px;line-height:13px;color:#262626;">21</div>
<div class="a" style="left:1px;top:663px;width:25px;height:1px;background:#c6c6c6"></div>
<div class="a" style="left:6.27px;top:648px;font-size:13px;line-height:13px;color:#262626;">22</div>
<div class="a" style="left:1px;top:683px;width:25px;height:1px;background:#c6c6c6"></div>
<div class="a" style="left:6.27px;top:668px;font-size:13px;line-height:13px;color:#262626;">23</div>
<div class="a" style="left:1px;top:703px;width:25px;height:1px;background:#c6c6c6"></div>
<div class="a" style="left:6.27px;top:688px;font-size:13px;line-height:13px;color:#262626;">24</div>
<div class="a" style="left:27px;top:243px;width:1390px;height:1px;background:#d4d4d4"></div>
<div class="a" style="left:27px;top:263px;width:1390px;height:1px;background:#d4d4d4"></div>
<div class="a" style="left:27px;top:283px;width:1390px;height:1px;background:#d4d4d4"></div>
<div class="a" style="left:27px;top:303px;width:1390px;height:1px;background:#d4d4d4"></div>
<div class="a" style="left:27px;top:323px;width:1390px;height:1px;background:#d4d4d4"></div>
<div class="a" style="left:27px;top:343px;width:1390px;height:1px;background:#d4d4d4"></div>
<div class="a" style="left:27px;top:363px;width:1390px;height:1px;background:#d4d4d4"></div>
<div class="a" style="left:27px;top:383px;width:1390px;height:1px;background:#d4d4d4"></div>
<div class="a" style="left:27px;top:403px;width:1390px;height:1px;background:#d4d4d4"></div>
<div class="a" style="left:27px;top:423px;width:1390px;height:1px;background:#d4d4d4"></div>
<div class="a" style="left:27px;top:443px;width:1390px;height:1px;background:#d4d4d4"></div>
<div class="a" style="left:27px;top:463px;width:1390px;height:1px;background:#d4d4d4"></div>
<div class="a" style="left:27px;top:483px;width:1390px;height:1px;background:#d4d4d4"></div>
<div class="a" style="left:27px;top:503px;width:1390px;height:1px;background:#d4d4d4"></div>
<div class="a" style="left:27px;top:523px;width:1390px;height:1px;background:#d4d4d4"></div>
<div class="a" style="left:27px;top:543px;width:1390px;height:1px;background:#d4d4d4"></div>
<div class="a" style="left:27px;top:563px;width:1390px;height:1px;background:#d4d4d4"></div>
<div class="a" style="left:27px;top:583px;width:1390px;height:1px;background:#d4d4d4"></div>
<div class="a" style="left:27px;top:603px;width:1390px;height:1px;background:#d4d4d4"></div>
<div class="a" style="left:27px;top:623px;width:1390px;height:1px;background:#d4d4d4"></div>
<div class="a" style="left:27px;top:643px;width:1390px;height:1px;background:#d4d4d4"></div>
<div class="a" style="left:27px;top:663px;width:1390px;height:1px;background:#d4d4d4"></div>
<div class="a" style="left:27px;top:683px;width:1390px;height:1px;background:#d4d4d4"></div>
<div class="a" style="left:27px;top:703px;width:1390px;height:1px;background:#d4d4d4"></div>
<div class="a" style="left:146px;top:224px;width:1px;height:484px;background:#d4d4d4"></div>
<div class="a" style="left:237px;top:224px;width:1px;height:484px;background:#d4d4d4"></div>
<div class="a" style="left:317px;top:224px;width:1px;height:484px;background:#d4d4d4"></div>
<div class="a" style="left:397px;top:224px;width:1px;height:484px;background:#d4d4d4"></div>
<div class="a" style="left:477px;top:224px;width:1px;height:484px;background:#d4d4d4"></div>
<div class="a" style="left:557px;top:224px;width:1px;height:484px;background:#d4d4d4"></div>
<div class="a" style="left:637px;top:224px;width:1px;height:484px;background:#d4d4d4"></div>
<div class="a" style="left:717px;top:224px;width:1px;height:484px;background:#d4d4d4"></div>
<div class="a" style="left:797px;top:224px;width:1px;height:484px;background:#d4d4d4"></div>
<div class="a" style="left:877px;top:224px;width:1px;height:484px;background:#d4d4d4"></div>
<div class="a" style="left:957px;top:224px;width:1px;height:484px;background:#d4d4d4"></div>
<div class="a" style="left:1037px;top:224px;width:1px;height:484px;background:#d4d4d4"></div>
<div class="a" style="left:1117px;top:224px;width:1px;height:484px;background:#d4d4d4"></div>
<div class="a" style="left:1197px;top:224px;width:1px;height:484px;background:#d4d4d4"></div>
<div class="a" style="left:1277px;top:224px;width:1px;height:484px;background:#d4d4d4"></div>
<div class="a" style="left:1357px;top:224px;width:1px;height:484px;background:#d4d4d4"></div>
<div class="a" style="left:1417px;top:204px;width:1px;height:504px;background:#ababab"></div>
<div class="a" style="left:27px;top:224px;width:451px;height:19px;background:#ffc000"></div>
<div class="a" style="left:27px;top:243px;width:451px;height:120px;background:#cecece"></div>
<div class="a" style="left:27px;top:244px;width:119px;height:19px;background:#fff"></div>
<div class="a" style="left:146px;top:224px;width:1px;height:139px;background:#000"></div>
<div class="a" style="left:237px;top:224px;width:1px;height:139px;background:#000"></div>
<div class="a" style="left:317px;top:224px;width:1px;height:139px;background:#000"></div>
<div class="a" style="left:397px;top:224px;width:1px;height:139px;background:#000"></div>
<div class="a" style="left:477px;top:224px;width:1px;height:139px;background:#000"></div>
<div class="a" style="left:27px;top:243px;width:451px;height:1px;background:#000"></div>
<div class="a" style="left:27px;top:263px;width:451px;height:1px;background:#000"></div>
<div class="a" style="left:27px;top:283px;width:451px;height:1px;background:#000"></div>
<div class="a" style="left:27px;top:303px;width:451px;height:1px;background:#000"></div>
<div class="a" style="left:27px;top:323px;width:451px;height:1px;background:#000"></div>
<div class="a" style="left:27px;top:343px;width:451px;height:1px;background:#000"></div>
<div class="a" style="left:28px;top:263px;width:118px;height:1px;background:#000"></div>
<div class="a" style="left:27px;top:263px;width:1px;height:1px;background:#fff"></div>
<div class="a" style="left:62.25px;top:228px;font-size:13.25px;line-height:13.25px;color:#000;letter-spacing:-0.401px;font-weight:bold;">Sistema</div>
<div class="a" style="left:150.35px;top:228px;font-size:13.25px;line-height:13.25px;color:#000;letter-spacing:-0.238px;font-weight:bold;">Desarrollador</div>
<div class="a" style="left:256.35px;top:228px;font-size:13.25px;line-height:13.25px;color:#000;letter-spacing:-0.521px;font-weight:bold;">Ciudad</div>
<div class="a" style="left:345.35px;top:228px;font-size:13.25px;line-height:13.25px;color:#000;letter-spacing:-0.985px;font-weight:bold;">Pais</div>
<div class="a" style="left:422.50px;top:228px;font-size:13.25px;line-height:13.25px;color:#000;letter-spacing:0.151px;font-weight:bold;">Area</div>
<div class="a" style="left:29.50px;top:248px;font-size:13.1px;line-height:13.1px;color:#000;letter-spacing:0.042px;">macOS Mojave</div>
<div class="a" style="left:149.00px;top:248px;font-size:13.1px;line-height:13.1px;color:#000;letter-spacing:0.623px;">Apple</div>
<div class="a" style="left:240.50px;top:248px;font-size:13.1px;line-height:13.1px;color:#000;letter-spacing:0.095px;">Bogota</div>
<div class="a" style="left:320.50px;top:248px;font-size:13.1px;line-height:13.1px;color:#000;letter-spacing:0.379px;">Colombia</div>
<div class="a" style="left:400.50px;top:248px;font-size:13.1px;line-height:13.1px;color:#000;letter-spacing:0.643px;">Norte</div>
<div class="a" style="left:29.50px;top:268px;font-size:13.1px;line-height:13.1px;color:#000;letter-spacing:-0.116px;">macOS High Sierra</div>
<div class="a" style="left:149.00px;top:268px;font-size:13.1px;line-height:13.1px;color:#000;letter-spacing:0.623px;">Apple</div>
<div class="a" style="left:240.50px;top:268px;font-size:13.1px;line-height:13.1px;color:#000;letter-spacing:0.125px;">Barcelona</div>
<div class="a" style="left:320.50px;top:268px;font-size:13.1px;line-height:13.1px;color:#000;letter-spacing:-0.487px;">España</div>
<div class="a" style="left:400.50px;top:268px;font-size:13.1px;line-height:13.1px;color:#000;letter-spacing:0.378px;">Occidente</div>
<div class="a" style="left:29.50px;top:288px;font-size:13.1px;line-height:13.1px;color:#000;letter-spacing:-0.361px;">FreeBSD</div>
<div class="a" style="left:149.00px;top:288px;font-size:13.1px;line-height:13.1px;color:#000;letter-spacing:-0.361px;">FreeBSD</div>
<div class="a" style="left:240.50px;top:288px;font-size:13.1px;line-height:13.1px;color:#000;letter-spacing:0.511px;">Madrid</div>
<div class="a" style="left:320.50px;top:288px;font-size:13.1px;line-height:13.1px;color:#000;letter-spacing:-0.487px;">España</div>
<div class="a" style="left:400.50px;top:288px;font-size:13.1px;line-height:13.1px;color:#000;letter-spacing:-0.542px;">Sur</div>
<div class="a" style="left:29.50px;top:308px;font-size:13.1px;line-height:13.1px;color:#000;letter-spacing:0.178px;">Ubuntu&nbsp; 19</div>
<div class="a" style="left:149.00px;top:308px;font-size:13.1px;line-height:13.1px;color:#000;letter-spacing:0.169px;">Linux</div>
<div class="a" style="left:240.50px;top:308px;font-size:13.1px;line-height:13.1px;color:#000;letter-spacing:-0.556px;">La Paz</div>
<div class="a" style="left:320.50px;top:308px;font-size:13.1px;line-height:13.1px;color:#000;letter-spacing:0.399px;">Bolivia</div>
<div class="a" style="left:400.50px;top:308px;font-size:13.1px;line-height:13.1px;color:#000;letter-spacing:0.643px;">Norte</div>
<div class="a" style="left:29.50px;top:328px;font-size:13.1px;line-height:13.1px;color:#000;letter-spacing:0.372px;">Windows 10</div>
<div class="a" style="left:149.00px;top:328px;font-size:13.1px;line-height:13.1px;color:#000;letter-spacing:0.608px;">Microsoft</div>
<div class="a" style="left:240.50px;top:328px;font-size:13.1px;line-height:13.1px;color:#000;letter-spacing:0.041px;">Mexico D.F</div>
<div class="a" style="left:320.50px;top:328px;font-size:13.1px;line-height:13.1px;color:#000;letter-spacing:0.500px;">Mexico</div>
<div class="a" style="left:400.50px;top:328px;font-size:13.1px;line-height:13.1px;color:#000;letter-spacing:0.378px;">Occidente</div>
<div class="a" style="left:29.50px;top:348px;font-size:13.1px;line-height:13.1px;color:#000;letter-spacing:-0.137px;">Server 2019</div>
<div class="a" style="left:149.00px;top:348px;font-size:13.1px;line-height:13.1px;color:#000;letter-spacing:0.608px;">Microsoft</div>
<div class="a" style="left:240.50px;top:348px;font-size:13.1px;line-height:13.1px;color:#000;letter-spacing:-0.190px;">Cali</div>
<div class="a" style="left:320.50px;top:348px;font-size:13.1px;line-height:13.1px;color:#000;letter-spacing:0.379px;">Colombia</div>
<div class="a" style="left:400.50px;top:348px;font-size:13.1px;line-height:13.1px;color:#000;letter-spacing:-0.542px;">Sur</div>
<div class="a" style="left:25px;top:242px;width:454px;height:2px;background:#00733e"></div>
<div class="a" style="left:25px;top:363px;width:454px;height:2px;background:#00733e"></div>
<div class="a" style="left:25px;top:242px;width:2px;height:123px;background:#00733e"></div>
<div class="a" style="left:477px;top:242px;width:2px;height:123px;background:#00733e"></div>
<div class="a" style="left:27px;top:244px;width:1px;height:118px;background:#fff"></div>
<div class="a" style="left:476px;top:244px;width:1px;height:118px;background:#fff"></div>
<div class="a" style="left:27px;top:362px;width:450px;height:1px;background:#fff"></div>
<div class="a" style="left:474px;top:360px;width:7px;height:7px;background:#fff"></div>
<div class="a" style="left:475px;top:361px;width:5px;height:5px;background:#00733e"></div>
<div class="a" style="left:1418px;top:204px;width:21px;height:504px;background:#e6e6e6"></div>
<div class="a" style="left:1421px;top:206px;width:15px;height:15px;background:#fff;border:1px solid #c6c6c6"></div>
<svg class="a" style="left:1424px;top:211px;" width="9" height="5" viewBox="0 0 9 5"><path d="M0 5h9L4.5 0z" fill="#777"/></svg>
<div class="a" style="left:1421px;top:221px;width:15px;height:453px;background:#fff;border:1px solid #ababab"></div>
<div class="a" style="left:1418px;top:674px;width:21px;height:21px;background:#dadada"></div>
<div class="a" style="left:1422px;top:695px;width:14px;height:13px;background:#fff;border:1px solid #c6c6c6"></div>
<svg class="a" style="left:1424px;top:700px;" width="9" height="5" viewBox="0 0 9 5"><path d="M0 0h9L4.5 5z" fill="#777"/></svg>
<div class="a" style="left:0px;top:708px;width:1440px;height:28px;background:#e6e6e6"></div>
<div class="a" style="left:0px;top:708px;width:1440px;height:1px;background:#9f9f9f"></div>
<div class="a" style="left:0px;top:736px;width:1440px;height:1px;background:#c6c6c6"></div>
<svg class="a" style="left:26px;top:717px;" width="8" height="10" viewBox="0 0 8 10"><path d="M6 0v9L1 4.5z" fill="#c8c8c8"/></svg>
<svg class="a" style="left:55px;top:717px;" width="8" height="10" viewBox="0 0 8 10"><path d="M1 0v9l5-4.5z" fill="#c8c8c8"/></svg>
<div class="a" style="left:101px;top:708px;width:60px;height:25px;background:#fff;border-left:1px solid #9f9f9f;border-right:1px solid #9f9f9f"></div>
<div class="a" style="left:101px;top:731px;width:60px;height:2px;background:#00733e"></div>
<div class="a" style="left:113.50px;top:716px;font-size:12.5px;line-height:12.5px;color:#00733e;letter-spacing:0.241px;font-weight:bold;">Hoja1</div>
<svg class="a" style="left:193px;top:713px;" width="18" height="18" viewBox="0 0 18 18"><circle cx="9" cy="9" r="7.6" fill="none" stroke="#777" stroke-width="1.3"/><path d="M9 4.5v9M4.5 9h9" stroke="#777" stroke-width="1.6"/></svg>
<div class="a" style="left:864px;top:716px;width:2px;height:2px;background:#b4b4b4"></div>
<div class="a" style="left:864px;top:720px;width:2px;height:2px;background:#b4b4b4"></div>
<div class="a" style="left:864px;top:724px;width:2px;height:2px;background:#b4b4b4"></div>
<div class="a" style="left:881px;top:715px;width:15px;height:15px;background:#fff;border:1px solid #c6c6c6"></div>
<svg class="a" style="left:885px;top:718px;" width="6" height="9" viewBox="0 0 6 9"><path d="M5 0v9L0 4.5z" fill="#777"/></svg>
<div class="a" style="left:895px;top:715px;width:476px;height:15px;background:#fff;border:1px solid #ababab"></div>
<div class="a" style="left:1371px;top:715px;width:48px;height:15px;background:#dadada"></div>
<div class="a" style="left:1405px;top:715px;width:15px;height:15px;background:#fff;border:1px solid #c6c6c6"></div>
<svg class="a" style="left:1410px;top:718px;" width="6" height="9" viewBox="0 0 6 9"><path d="M0 0v9l5-4.5z" fill="#999"/></svg>
<div class="a" style="left:0px;top:737px;width:1440px;height:22px;background:#fff"></div>
<div class="a" style="left:8.50px;top:741px;font-size:11.75px;line-height:11.75px;color:#262626;letter-spacing:-0.454px;">Listo</div>
<svg class="a" style="left:51px;top:739px;" width="15" height="15" viewBox="0 0 15 15"><circle cx="4" cy="4" r="3.3" fill="#6a6a6a"/><rect x="8" y="2" width="6" height="3" fill="#6a6a6a"/><path d="M2 7.5h12v7h-12z" fill="none" stroke="#6a6a6a"/><path d="M2 10h12M2 12.5h12M5 7.5v7M8 7.5v7M11 7.5v7" stroke="#6a6a6a" stroke-width=".8"/></svg>
<div class="a" style="left:1057.00px;top:740px;font-size:11.75px;line-height:11.75px;color:#262626;letter-spacing:-0.309px;">Recuento: 35</div>
<div class="a" style="left:1142px;top:736px;width:38px;height:21px;background:#c8c8c8"></div>
<svg class="a" style="left:1154px;top:740px;" width="13" height="13" viewBox="0 0 13 13"><path d="M.5 .5h12v12h-12z" fill="none" stroke="#666"/><path d="M4.5 .5v12M8.5 .5v12M.5 4.5h12M.5 8.5h12" stroke="#666"/></svg>
<svg class="a" style="left:1192px;top:740px;" width="14" height="13" viewBox="0 0 14 13"><path d="M.5 .5h13v12h-13z" fill="none" stroke="#666"/><path d="M3.5 3.5h7v6h-7z" fill="none" stroke="#666"/><path d="M5 5.5h4M5 7.5h4" stroke="#666"/></svg>
<svg class="a" style="left:1230px;top:740px;" width="14" height="13" viewBox="0 0 14 13"><path d="M.5 .5h13v12h-13z" fill="none" stroke="#666"/><path d="M.5 7.5h9v-7M5.5 .5v7" fill="none" stroke="#666"/></svg>
<div class="a" style="left:1261px;top:746px;width:6px;height:2px;background:#444"></div>
<div class="a" style="left:1271px;top:747px;width:100px;height:1px;background:#9a9a9a"></div>
<div class="a" style="left:1319px;top:741px;width:5px;height:11px;background:#666"></div>
<svg class="a" style="left:1374px;top:743px;" width="9" height="9" viewBox="0 0 9 9"><path d="M4 0v8M0 4h8" stroke="#444" stroke-width="1.6"/></svg>
<div class="a" style="left:1393.00px;top:741px;font-size:11.75px;line-height:11.75px;color:#444;letter-spacing:-1.019px;">100%</div>
<div class="a" style="left:1385px;top:704px;width:54px;height:54px;border-radius:50%;background:rgba(255,255,255,.5);border:1px solid rgba(170,200,225,.45)"></div>
<svg class="a" style="left:1380px;top:700px" width="60" height="59" viewBox="1380 700 60 59"><path d="M1413 709C1403 709 1396 716 1396 725C1396 733 1400 736 1404 737C1409 738 1413 740 1416 745M1413 709C1421 709 1427 714 1427 720C1427 727 1423 731 1423 736C1423 739 1422 741 1416 745C1422 744 1429 745 1427 748C1425 751 1420 753 1417 755" fill="none" stroke="#3a85c8" stroke-width="2" stroke-linecap="round"/></svg>
<div class="a" style="left:531px;top:246px;width:673px;height:288px;background:rgba(0,0,0,.055);border-radius:12px;filter:blur(1.2px)"></div>
<div class="a" style="left:535px;top:250px;width:663px;height:278px;background:rgba(0,0,0,.05);border-radius:8px;filter:blur(2px)"></div>
<div class="a" style="left:537px;top:252px;width:658px;height:273px;background:rgba(0,0,0,.06);border-radius:3px;filter:blur(1px)"></div>
<div class="a" style="left:538px;top:253px;width:654px;height:268px;background:#f0f0f0;border:1px solid #6b6b6b"></div>
<div class="a" style="left:539px;top:254px;width:652px;height:30px;background:#fff"></div>
<div class="a" style="left:548.00px;top:263px;font-size:11.75px;line-height:11.75px;color:#000;letter-spacing:-0.133px;">Ordenar</div>
<div class="a" style="left:1121.00px;top:262px;font-size:13px;line-height:13px;color:#000;-webkit-text-stroke:0.5px #000;">?</div>
<svg class="a" style="left:1162px;top:262px;" width="12" height="12" viewBox="0 0 12 12"><path d="M1 1L11 11M11 1L1 11" stroke="#111" stroke-width="1.2"/></svg>
<div class="a" style="left:546px;top:292px;width:104px;height:24px;background:#e1e1e1;border:1px solid #adadad"></div>
<div class="a" style="left:654px;top:292px;width:104px;height:24px;background:#e1e1e1;border:1px solid #adadad"></div>
<div class="a" style="left:762px;top:292px;width:97px;height:24px;background:#e1e1e1;border:1px solid #adadad"></div>
<div class="a" style="left:861px;top:291px;width:1px;height:26px;background:#000"></div>
<div class="a" style="left:865px;top:292px;width:24px;height:24px;background:#e1e1e1;border:1px solid #adadad"></div>
<div class="a" style="left:893px;top:292px;width:24px;height:24px;background:#e1e1e1;border:1px solid #adadad"></div>
<div class="a" style="left:921px;top:292px;width:76px;height:24px;background:#e1e1e1;border:1px solid #adadad"></div>
<div class="a" style="left:573.50px;top:298px;font-size:11.75px;line-height:11.75px;color:#000;letter-spacing:-0.119px;"><u>A</u>gregar nivel</div>
<div class="a" style="left:681.50px;top:298px;font-size:11.75px;line-height:11.75px;color:#000;letter-spacing:-0.197px;"><u>E</u>liminar nivel</div>
<div class="a" style="left:789.00px;top:298px;font-size:11.75px;line-height:11.75px;color:#000;letter-spacing:-0.095px;"><u>C</u>opiar nivel</div>
<div class="a" style="left:930.50px;top:298px;font-size:11.75px;line-height:11.75px;color:#000;letter-spacing:-0.213px;"><u>O</u>pciones...</div>
<svg class="a" style="left:553px;top:295px;" width="18" height="18" viewBox="0 0 18 18"><path d="M4 0.5v6M1 3.5h6" stroke="#3d9f73" stroke-width="1.8"/><path d="M6.3 10.5L8.8 3.5L11.3 10.5M7.2 8.3h3.2" stroke="#2f84c8" stroke-width="1.2" fill="none"/><path d="M7.3 11.3h4l-4 5h4" stroke="#8e58b8" stroke-width="1.2" fill="none"/><path d="M15 4v12M12.8 13.5L15 16.5L17.2 13.5" stroke="#666" stroke-width="1" fill="none"/></svg>
<svg class="a" style="left:661px;top:296px;" width="17" height="16" viewBox="0 0 17 16"><path d="M2 1.5L15 14.5M15 1.5L2 14.5" stroke="#444" stroke-width="2.2"/></svg>
<svg class="a" style="left:767px;top:295px;" width="16" height="17" viewBox="0 0 16 17"><path d="M1.5 1.5h6l2 2v9h-8z" fill="#fff" stroke="#555"/><path d="M6.5 5.5h6l2 2v9h-8z" fill="#fff" stroke="#555"/><path d="M8.5 9.5h4M8.5 11.5h4M8.5 13.5h4" stroke="#2f84c8"/><path d="M3 5h3M3 7h3" stroke="#555"/></svg>
<svg class="a" style="left:872px;top:300px;" width="11" height="6" viewBox="0 0 11 6"><path d="M0 6h10L5 0z" fill="#b0b0b0"/></svg>
<svg class="a" style="left:900px;top:301px;" width="11" height="6" viewBox="0 0 11 6"><path d="M0 0h10L5 6z" fill="#b0b0b0"/></svg>
<div class="a" style="left:1007px;top:297px;width:13px;height:13px;background:#fff;border:1px solid #333"></div>
<svg class="a" style="left:1008px;top:298px;" width="11" height="11" viewBox="0 0 11 11"><path d="M1.8 5.5l2.6 2.7 5-6" stroke="#333" stroke-width="1.1" fill="none"/></svg>
<div class="a" style="left:1027.50px;top:298px;font-size:11.75px;line-height:11.75px;color:#000;letter-spacing:-0.138px;"><u>M</u>is datos tienen encabezados</div>
<div class="a" style="left:545px;top:320px;width:640px;height:167px;background:#fff;border:1px solid #828790"></div>
<div class="a" style="left:761px;top:321px;width:1px;height:21px;background:#f0f0f0"></div>
<div class="a" style="left:976px;top:321px;width:1px;height:21px;background:#f0f0f0"></div>
<div class="a" style="left:1182px;top:321px;width:1px;height:21px;background:#f0f0f0"></div>
<div class="a" style="left:551.50px;top:326px;font-size:11.75px;line-height:11.75px;color:#000;letter-spacing:-0.339px;">Columna</div>
<div class="a" style="left:766.50px;top:326px;font-size:11.75px;line-height:11.75px;color:#000;letter-spacing:-0.115px;">Ordenar según</div>
<div class="a" style="left:981.50px;top:326px;font-size:11.75px;line-height:11.75px;color:#000;">Criterio de ordenación</div>
<div class="a" style="left:547px;top:342px;width:636px;height:23px;background:#e3e3e3"></div>
<div class="a" style="left:549.50px;top:344px;font-size:11.75px;line-height:11.75px;color:#000;letter-spacing:0.014px;">Ordenar por</div>
<div class="a" style="left:623px;top:343px;width:129px;height:21px;background:#fff;border:1px solid #a0a0a0"></div>
<div class="a" style="left:733px;top:345px;width:17px;height:17px;background:#e9e9e9;border:1px solid #adadad"></div>
<svg class="a" style="left:737px;top:351px;" width="10" height="6" viewBox="0 0 10 6"><path d="M.5 .5l4.5 4.5 4.5-4.5" stroke="#444" stroke-width="1" fill="none"/></svg>
<div class="a" style="left:763px;top:343px;width:204px;height:21px;background:#fff;border:1px solid #a0a0a0"></div>
<div class="a" style="left:948px;top:345px;width:17px;height:17px;background:#e9e9e9;border:1px solid #adadad"></div>
<svg class="a" style="left:952px;top:351px;" width="10" height="6" viewBox="0 0 10 6"><path d="M.5 .5l4.5 4.5 4.5-4.5" stroke="#444" stroke-width="1" fill="none"/></svg>
<div class="a" style="left:978px;top:343px;width:204px;height:21px;background:#fff;border:1px solid #a0a0a0"></div>
<div class="a" style="left:1163px;top:345px;width:17px;height:17px;background:#e9e9e9;border:1px solid #adadad"></div>
<svg class="a" style="left:1167px;top:351px;" width="10" height="6" viewBox="0 0 10 6"><path d="M.5 .5l4.5 4.5 4.5-4.5" stroke="#444" stroke-width="1" fill="none"/></svg>
<div class="a" style="left:625px;top:345px;width:107px;height:17px;background:#6de3f3;border:1px dotted #222"></div>
<div class="a" style="left:627.00px;top:347px;font-size:11.75px;line-height:11.75px;color:#000;letter-spacing:-0.692px;">Sistema</div>
<div class="a" style="left:767.50px;top:347px;font-size:11.75px;line-height:11.75px;color:#000;letter-spacing:-0.225px;">Valores de celda</div>
<div class="a" style="left:982.00px;top:347px;font-size:12px;line-height:12px;color:#000;">A a Z</div>
<div class="a" style="left:1027px;top:491px;width:73px;height:21px;background:#e1e1e1;border:2px solid #0a64c8"></div>
<div class="a" style="left:1111px;top:491px;width:73px;height:21px;background:#e1e1e1;border:1px solid #adadad"></div>
<div class="a" style="left:1044.50px;top:497px;font-size:11.75px;line-height:11.75px;color:#000;letter-spacing:-0.248px;">Aceptar</div>
<div class="a" style="left:1125.50px;top:497px;font-size:11.75px;line-height:11.75px;color:#000;letter-spacing:-0.432px;">Cancelar</div>
<div class="a" style="left:1188px;top:510px;width:2px;height:2px;background:#b8b8b8"></div>
<div class="a" style="left:1184px;top:514px;width:2px;height:2px;background:#b8b8b8"></div>
<div class="a" style="left:1188px;top:514px;width:2px;height:2px;background:#b8b8b8"></div>
<div class="a" style="left:1180px;top:518px;width:2px;height:2px;background:#b8b8b8"></div>
<div class="a" style="left:1184px;top:518px;width:2px;height:2px;background:#b8b8b8"></div>
<div class="a" style="left:1188px;top:518px;width:2px;height:2px;background:#b8b8b8"></div>
<svg class="a" style="left:495px;top:286px;filter:drop-shadow(-2px 2px 2px rgba(0,0,0,.25))" width="60" height="42" viewBox="495 286 60 42"><path d="M500 298H526V289.2L549 306.4L526 323.8V315H500z" fill="#ff5454"/></svg>
<div class="a" style="left:538px;top:289px;width:1px;height:35px;background:#7e3a3a"></div>
<div class="a" style="left:0px;top:0px;width:1440px;height:1px;background:#1c1c1c;z-index:50"></div>
<div class="a" style="left:0px;top:758px;width:1440px;height:1px;background:#1c1c1c;z-index:50"></div>
<div class="a" style="left:0px;top:0px;width:1px;height:759px;background:#1c1c1c;z-index:50"></div>
<div class="a" style="left:1439px;top:0px;width:1px;height:759px;background:#1c1c1c;z-index:50"></div>
</body></html>
